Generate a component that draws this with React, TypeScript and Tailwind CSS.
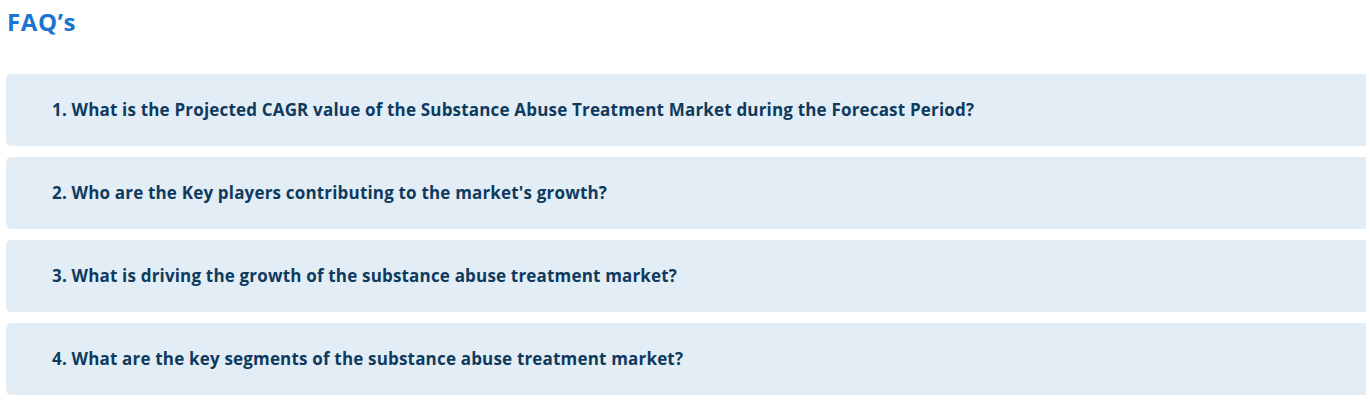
import React from "react";

const faqs = [
  "1. What is the Projected CAGR value of the Substance Abuse Treatment Market during the Forecast Period?",
  "2. Who are the Key players contributing to the market's growth?",
  "3. What is driving the growth of the substance abuse treatment market?",
  "4. What are the key segments of the substance abuse treatment market?",
];

export default function App() {
  return (
    <div className="w-[1366px] h-[400px] overflow-hidden bg-white" style={{ fontFamily: "'Open Sans', 'Noto Sans', sans-serif" }}>
      <div className="pl-[7px] pt-[5px]">
        <h2 className="text-[24px] leading-[33px] font-bold tracking-[0.6px] text-[#1b74d0]">FAQ’s</h2>
      </div>
      <div className="mt-[36px] ml-[6px] w-[1372px] flex flex-col gap-[11px]">
        {faqs.map((q) => (
          <div key={q} className="h-[72px] rounded-[5px] bg-[#e3edf6] flex items-center pl-[46px]">
            <span className="text-[17px] font-bold tracking-[0.18px] text-[#0e3a5e]">{q}</span>
          </div>
        ))}
      </div>
    </div>
  );
}
